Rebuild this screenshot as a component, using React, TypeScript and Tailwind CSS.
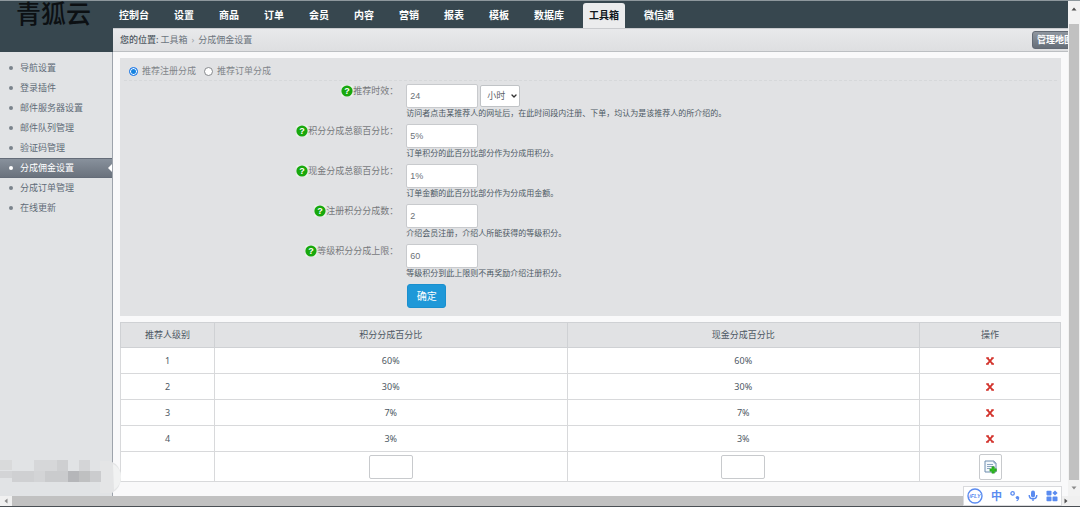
import React from "react";
import clsx from "clsx";
import { ChevronDown } from "lucide-react";

interface FieldRowProps {
  id: string;
  label: string;
  hint: string;
  defaultValue: string;
  children?: React.ReactNode;
}

interface ScrollArrowProps {
  points: string;
  className?: string;
}

const navItems = [
  "控制台",
  "设置",
  "商品",
  "订单",
  "会员",
  "内容",
  "营销",
  "报表",
  "模板",
  "数据库",
  "工具箱",
  "微信通",
];

const sideItems = [
  "导航设置",
  "登录插件",
  "邮件服务器设置",
  "邮件队列管理",
  "验证码管理",
  "分成佣金设置",
  "分成订单管理",
  "在线更新",
];

const levels = [
  { level: 1, points: "60%", cash: "60%" },
  { level: 2, points: "30%", cash: "30%" },
  { level: 3, points: "7%", cash: "7%" },
  { level: 4, points: "3%", cash: "3%" },
];

// x, y, width, height, color
const mosaicCells: [number, number, number, number, string][] = [
  [0, 0, 12, 10, "#d9dadb"],
  [34, 0, 23, 11, "#d6d7d9"],
  [57, 0, 11, 11, "#cecfd1"],
  [79, 0, 11, 11, "#d4d5d7"],
  [0, 11, 12, 7, "#d3d4d6"],
  [12, 11, 22, 11, "#cfd0d2"],
  [34, 11, 11, 11, "#d3d4d6"],
  [45, 11, 23, 11, "#cacbcd"],
  [68, 11, 11, 11, "#b5b6b9"],
  [79, 11, 11, 11, "#bfc0c1"],
  [90, 11, 11, 11, "#cbccce"],
];

const inputStyle =
  "rounded-[2px] border border-[#c8cacd] bg-white px-[3px] font-['Liberation_Sans',sans-serif] text-[9px] text-[#6b7177]";

const ScrollArrow: React.FC<ScrollArrowProps> = ({ points, className }) => (
  <svg viewBox="0 0 8 8" className={clsx("size-2 shrink-0", className)} aria-hidden="true">
    <polygon points={points} fill="currentColor" />
  </svg>
);

const HelpIcon: React.FC = () => (
  <svg viewBox="0 0 12 12" className="size-3 shrink-0" aria-hidden="true">
    <rect x="0.5" y="0.5" width="11" height="11" fill="#eef5ec" />
    <circle cx="6" cy="6" r="5.6" fill="#18a80d" />
    <text x="6" y="9.3" textAnchor="middle" fontSize="9" fontWeight="700" fill="#fff" fontFamily="Liberation Sans">
      ?
    </text>
  </svg>
);

const Sidebar: React.FC = () => (
  <aside className="relative flex w-[113px] shrink-0 flex-col border-r border-[#9da3ab] bg-[#e1e3e5]">
    <div className="-mr-px h-[51px] shrink-0 bg-[#37474f] pl-4 text-[25px] leading-[25px] font-medium text-[#0c1013]">
      青狐云
    </div>
    <ul className="pt-[6px]">
      {sideItems.map((item) => {
        const active = item === "分成佣金设置";
        return (
          <li key={item}>
            <a
              href="#"
              className={clsx(
                "relative flex h-5 items-center gap-[7px] pl-[9px] text-[9px]",
                active
                  ? "border-y border-[#646c78] bg-linear-to-b from-[#88919c] to-[#6a727d] text-white"
                  : "text-[#5f6b77]"
              )}
            >
              <span className={clsx("size-1 rounded-full", active ? "bg-white" : "bg-[#7a838c]")} />
              {item}
              {active && (
                <svg viewBox="0 0 4 8" className="absolute top-[5px] right-0 h-2 w-1" aria-hidden="true">
                  <polygon points="4,0 4,8 0,4" fill="#fff" />
                </svg>
              )}
            </a>
          </li>
        );
      })}
    </ul>
    <svg viewBox="0 0 122 36" className="absolute bottom-0 left-0 z-10 h-9 w-[122px]" aria-hidden="true">
      <path d="M100 1 H110 Q121 5 121 17 Q121 28 112 33 H100 Z" fill="#e4e5e6" />
      <path d="M113 4 Q121 8 121 17 Q121 25 114 30 Z" fill="#f1f2f2" />
      {mosaicCells.map(([x, y, width, height, fill]) => (
        <rect key={`${x}-${y}`} x={x} y={y} width={width} height={height} fill={fill} />
      ))}
    </svg>
  </aside>
);

const TopNav: React.FC = () => (
  <nav className="flex h-[27px] shrink-0 items-end gap-[13px] overflow-hidden bg-[#37474f] text-[10px] font-bold whitespace-nowrap text-white">
    {navItems.map((item) => (
      <a
        key={item}
        href="#"
        className={clsx(
          "flex h-[25px] items-center px-1.5",
          item === "工具箱" && "rounded-t-[3px] bg-[#ebeced] text-[#10171c]"
        )}
      >
        {item}
      </a>
    ))}
  </nav>
);

const Breadcrumb: React.FC = () => (
  <div className="flex h-6 shrink-0 items-center justify-between border-y border-t-[#c9cbce] border-b-[#bcbfc2] bg-linear-to-b from-[#e8e9eb] to-[#dedfe1] pl-[7px] text-[9px] text-[#6d757e]">
    <div className="flex items-center gap-0.5">
      <span className="font-medium text-[#4e5861]">您的位置:</span>
      <a href="#">工具箱</a>
      <span className="px-0.5 text-[#9a9fa5]">›</span>
      <span>分成佣金设置</span>
    </div>
    <div className="w-9 overflow-hidden">
      <button
        type="button"
        className="h-[18px] rounded-[3px] border border-[#626973] bg-linear-to-b from-[#8f969f] to-[#666e78] px-1 text-[9px] leading-4 font-bold whitespace-nowrap text-white"
      >
        管理地图
      </button>
    </div>
  </div>
);

const FieldRow: React.FC<FieldRowProps> = ({ id, label, hint, defaultValue, children }) => (
  <div className="flex h-10">
    <label htmlFor={id} className="flex h-[14px] w-[30%] items-center justify-end pr-1 text-[9px] text-[#77797c]">
      <HelpIcon />
      {label}
    </label>
    <div className="flex-1 pl-1">
      <div className="flex h-6 items-center gap-0.5">
        <input id={id} type="text" defaultValue={defaultValue} className={clsx(inputStyle, "h-6 w-[72px]")} />
        {children}
      </div>
      <p className="text-[8px] leading-[10px] text-[#4c5863]">{hint}</p>
    </div>
  </div>
);

const CommissionForm: React.FC = () => (
  <form className="bg-[#e1e2e4] pb-2" onSubmit={(e) => e.preventDefault()}>
    <div className="mx-1 mb-[3px] flex h-[23px] items-center gap-2 border-b border-dashed border-[#d6d8da] px-[5px] pt-1 text-[9px] text-[#82868a]">
      {["推荐注册分成", "推荐订单分成"].map((text, i) => (
        <label key={text} className="flex items-center gap-1">
          <input
            type="radio"
            name="separate"
            defaultChecked={i === 0}
            className="size-[9px] appearance-none rounded-full border border-[#85888c] bg-white checked:border-[#2b7de9] checked:bg-[#1583e0] checked:shadow-[inset_0_0_0_1px_#fff]"
          />
          {text}
        </label>
      ))}
    </div>
    <FieldRow
      id="expire"
      label="推荐时效："
      defaultValue="24"
      hint="访问者点击某推荐人的网址后，在此时间段内注册、下单，均认为是该推荐人的所介绍的。"
    >
      <div className="relative">
        <select
          aria-label="时间单位"
          className="block h-[22px] w-10 appearance-none rounded-[2px] border border-[#c0c3c6] bg-white pl-1.5 text-[9px] text-[#5c6268]"
        >
          <option>小时</option>
          <option>天</option>
        </select>
        <ChevronDown strokeWidth={4} className="pointer-events-none absolute top-[7px] right-0.5 size-2 text-[#333]" />
      </div>
    </FieldRow>
    <FieldRow
      id="points-all"
      label="积分分成总额百分比："
      defaultValue="5%"
      hint="订单积分的此百分比部分作为分成用积分。"
    />
    <FieldRow
      id="money-all"
      label="现金分成总额百分比："
      defaultValue="1%"
      hint="订单金额的此百分比部分作为分成用金额。"
    />
    <FieldRow
      id="register-points"
      label="注册积分分成数："
      defaultValue="2"
      hint="介绍会员注册，介绍人所能获得的等级积分。"
    />
    <FieldRow
      id="register-limit"
      label="等级积分分成上限："
      defaultValue="60"
      hint="等级积分到此上限则不再奖励介绍注册积分。"
    />
    <div className="ml-[30%] pl-[5px]">
      <button
        type="submit"
        className="block h-6 w-[39px] rounded-[3px] border border-[#1a8fce] bg-[#1f98d8] text-[10px] text-white"
      >
        确定
      </button>
    </div>
  </form>
);

const DeleteIcon: React.FC = () => (
  <svg viewBox="0 0 8 8" className="size-2" aria-hidden="true">
    <path d="M1.4 1.2 L6.6 6.8 M6.6 1.2 L1.4 6.8" stroke="#d2322b" strokeWidth="1.8" fill="none" />
    <path d="M0.2 1 H2.8 M5.4 1 H7.8 M0 7 H2.6 M5.4 7 H8" stroke="#d2322b" strokeWidth="1.3" fill="none" />
  </svg>
);

const AddIcon: React.FC = () => (
  <svg viewBox="0 0 13 14" className="h-[14px] w-[13px]" aria-hidden="true">
    <path d="M1 1 H10 L12 3 V12 H1 Z" fill="#f4f8fc" stroke="#6d8cae" />
    <path d="M10 1 V3 H12" fill="#dce6f0" stroke="#6d8cae" strokeWidth="0.8" />
    <path d="M3 4.5 H9 M3 6.5 H10 M3 8.5 H6" stroke="#8ba4c0" />
    <path d="M7.9 6.8 H10.4 V8.8 H12.4 V11.2 H10.4 V13.2 H7.9 V11.2 H5.9 V8.8 H7.9 Z" fill="#2dbb20" stroke="#239119" strokeWidth="0.5" />
  </svg>
);

const LevelTable: React.FC = () => (
  <table className="w-full table-fixed border-collapse bg-white text-center text-[9px] text-[#4d5863] [&_td]:border [&_td]:border-[#d8d9db] [&_th]:border [&_th]:border-[#cfd1d4]">
    <thead>
      <tr className="h-[25px] bg-[#e1e2e4]">
        <th className="w-[10%] font-normal">推荐人级别</th>
        <th className="w-[37.5%] font-normal">积分分成百分比</th>
        <th className="w-[37.5%] font-normal">现金分成百分比</th>
        <th className="w-[15%] font-normal">操作</th>
      </tr>
    </thead>
    <tbody>
      {levels.map((row) => (
        <tr key={row.level} className="h-[26px]">
          <td>{row.level}</td>
          <td>{row.points}</td>
          <td>{row.cash}</td>
          <td>
            <button type="button" aria-label="删除" className="mx-auto block">
              <DeleteIcon />
            </button>
          </td>
        </tr>
      ))}
      <tr className="h-[30px]">
        <td />
        <td>
          <input type="text" aria-label="积分分成百分比" className={clsx(inputStyle, "mx-auto block h-6 w-11")} />
        </td>
        <td>
          <input type="text" aria-label="现金分成百分比" className={clsx(inputStyle, "mx-auto block h-6 w-11")} />
        </td>
        <td>
          <button
            type="button"
            aria-label="添加"
            className="mx-auto flex h-[26px] w-[23px] items-center justify-center rounded-[2px] border border-[#c8cacd]"
          >
            <AddIcon />
          </button>
        </td>
      </tr>
    </tbody>
  </table>
);

const ImeBar: React.FC = () => (
  <div className="absolute right-[18px] bottom-0 z-20 flex h-5 w-[99px] items-center justify-between border border-[#d9dadd] bg-white px-[3px] text-[#5a8bf0]">
    <svg viewBox="0 0 16 16" className="size-4" aria-hidden="true">
      <circle cx="8" cy="8" r="7" fill="none" stroke="currentColor" strokeWidth="1.4" />
      <text x="8" y="10" textAnchor="middle" fontSize="5.5" fontWeight="700" fontStyle="italic" fill="currentColor" fontFamily="Liberation Sans">
        iFLY
      </text>
    </svg>
    <span className="text-[11px] leading-4 font-bold">中</span>
    <svg viewBox="0 0 10 12" className="h-3 w-[10px]" aria-hidden="true">
      <circle cx="2.6" cy="3.4" r="1.7" fill="none" stroke="currentColor" strokeWidth="1.3" />
      <circle cx="7.4" cy="7.6" r="1.7" fill="currentColor" />
      <path d="M8.6 7.6 Q8.8 10 6.6 10.8" fill="none" stroke="currentColor" strokeWidth="1.1" />
    </svg>
    <svg viewBox="0 0 10 12" className="h-3 w-[10px]" aria-hidden="true">
      <rect x="3" y="0.5" width="4" height="7" rx="2" fill="currentColor" />
      <path d="M1.2 5 Q1.2 8.8 5 8.8 Q8.8 8.8 8.8 5 M5 8.8 V11" fill="none" stroke="currentColor" strokeWidth="1.4" />
    </svg>
    <svg viewBox="0 0 12 12" className="size-3" aria-hidden="true" fill="currentColor">
      <rect x="0.5" y="0.8" width="5" height="4.6" rx="0.8" />
      <path d="M9 0.4 L11.6 3 L9 5.6 L6.4 3 Z" />
      <rect x="0.5" y="6.6" width="5" height="4.6" rx="0.8" />
      <rect x="6.5" y="6.6" width="5" height="4.6" rx="0.8" />
    </svg>
  </div>
);

const App: React.FC = () => (
  <div className="relative flex h-screen flex-col overflow-hidden border-t border-b border-t-[#8e989d] border-b-[#4a4f54] bg-[#f9f9fa] font-['Noto_Sans','Noto_Sans_CJK_SC',sans-serif]">
    <div className="flex min-h-0 flex-1">
      <Sidebar />
      <div className="flex min-w-0 flex-1 flex-col">
        <TopNav />
        <Breadcrumb />
        <main className="flex flex-col gap-1.5 px-[7px] pt-1.5">
          <CommissionForm />
          <LevelTable />
        </main>
      </div>
      <div className="flex w-3 shrink-0 flex-col items-center bg-[#f2f2f2] py-1">
        <ScrollArrow points="4,2.5 6.5,5.5 1.5,5.5" className="text-[#505050]" />
        <div className="mt-[11px] mb-1 w-[10px] flex-1 bg-[#c1c1c1]" />
        <ScrollArrow points="4,5.5 6.5,2.5 1.5,2.5" className="text-[#8a8a8a]" />
      </div>
    </div>
    <div className="flex h-[10px] shrink-0 items-center bg-[#f0f0f0]">
      <ScrollArrow points="2.5,4 5.5,1.5 5.5,6.5" className="mx-0.5 text-[#8a8a8a]" />
      <div className="h-full flex-1 bg-[#c1c1c1]" />
      <div className="flex w-[60px] items-center justify-end pr-[10px]">
        <ScrollArrow points="5.5,4 2.5,1.5 2.5,6.5" className="text-[#505050]" />
      </div>
    </div>
    <ImeBar />
  </div>
);

export default App;
